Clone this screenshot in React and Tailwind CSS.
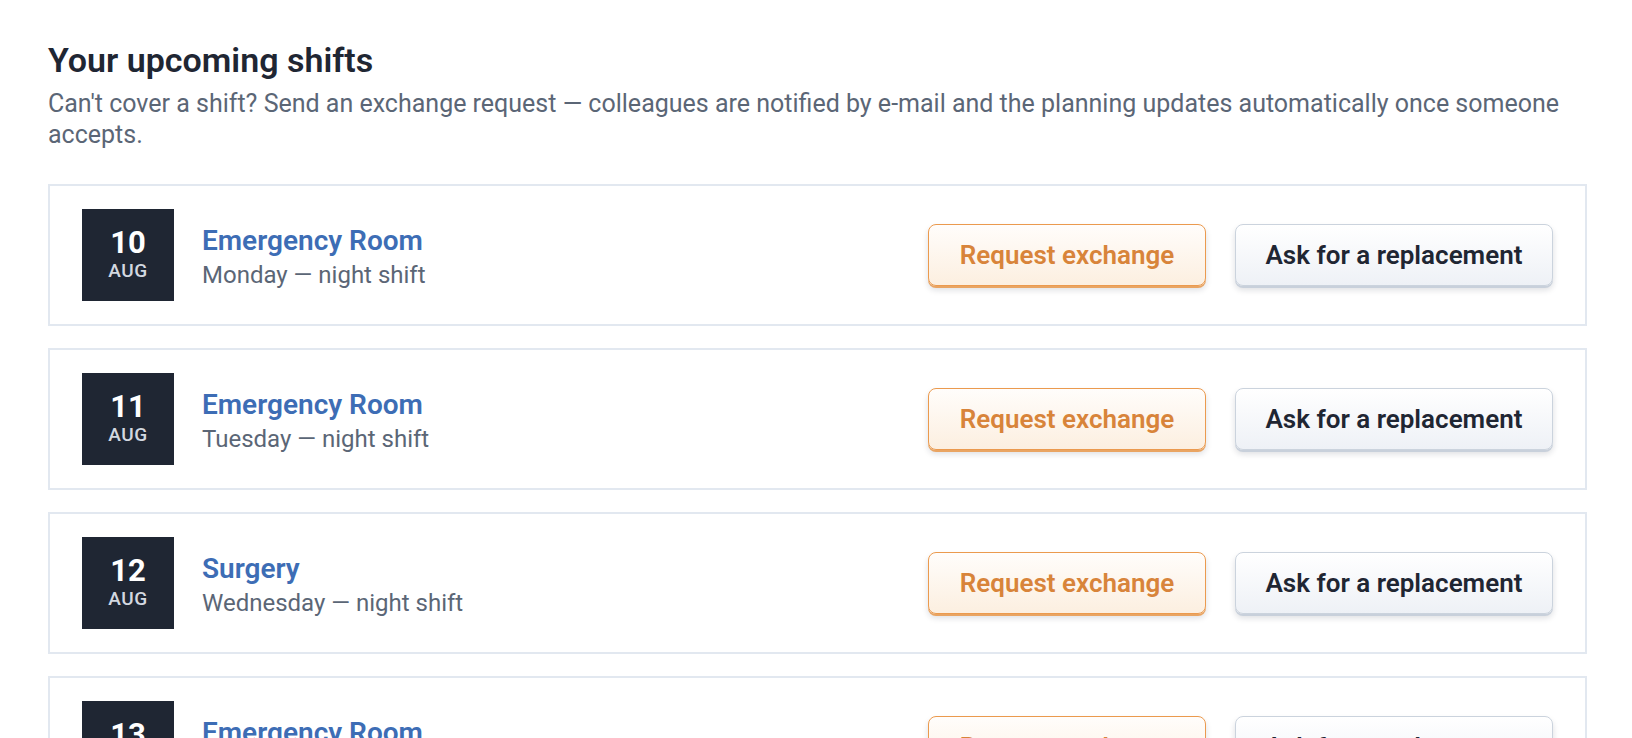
const shifts = [
  { day: '10', month: 'AUG', unit: 'Emergency Room', detail: 'Monday — night shift' },
  { day: '11', month: 'AUG', unit: 'Emergency Room', detail: 'Tuesday — night shift' },
  { day: '12', month: 'AUG', unit: 'Surgery', detail: 'Wednesday — night shift' },
  { day: '13', month: 'AUG', unit: 'Emergency Room', detail: 'Thursday — night shift' },
];

const ShiftCard = ({ day, month, unit, detail }) => {
  return (
    <div className="flex h-[142px] shrink-0 items-center border-2 border-[#e2e8f0] bg-white px-[32px]">
      {/* Date tile */}
      <div className="flex h-[92px] w-[92px] shrink-0 flex-col items-center justify-center bg-[#1f2633] text-white">
        <span className="text-[31px] font-bold leading-[30px]">{day}</span>
        <span className="mt-[2px] text-[19px] font-medium leading-[22px] tracking-[0.5px] text-[#d3d8e0]">{month}</span>
      </div>

      <div className="ml-[28px] flex flex-col pt-[3px]">
        <span className="text-[28px] font-semibold leading-[34px] text-[#3d6db5]">{unit}</span>
        <span className="mt-[2px] text-[24px] leading-[30px] text-[#5b6676]">{detail}</span>
      </div>

      <div className="ml-auto flex items-center gap-[29px]">
        <button className="h-[62px] w-[278px] rounded-lg border-[1.5px] border-[#eb9a4e] bg-gradient-to-b from-[#fffdfb] to-[#fcefe0] text-[26px] font-semibold text-[#d8843a] shadow-[0_2px_0_#e9a462,0_4px_6px_rgba(15,23,42,0.14)]">
          Request exchange
        </button>
        <button className="h-[62px] w-[318px] rounded-lg border-[1.5px] border-[#cbd3dd] bg-gradient-to-b from-[#ffffff] to-[#eef1f6] text-[26px] font-semibold text-[#1f2633] shadow-[0_2px_0_#c8d0db,0_4px_6px_rgba(15,23,42,0.14)]">
          Ask for a replacement
        </button>
      </div>
    </div>
  );
};

const App = () => {
  return (
    <div className="h-[738px] overflow-hidden bg-white pl-[48px] pr-[45px] pt-[40px] font-['Roboto',sans-serif]">
      <h1 className="text-[34px] font-semibold leading-[40px] text-[#1f2633]">Your upcoming shifts</h1>
      <p className="mt-[8px] text-[25px] leading-[31px] text-[#5b6676]">
        Can't cover a shift? Send an exchange request — colleagues are notified by e-mail and the planning updates automatically once someone accepts.
      </p>

      <div className="mt-[34px] flex flex-col gap-[22px]">
        {shifts.map((s) => (
          <ShiftCard key={s.day} {...s} />
        ))}
      </div>
    </div>
  );
};

export default App;
